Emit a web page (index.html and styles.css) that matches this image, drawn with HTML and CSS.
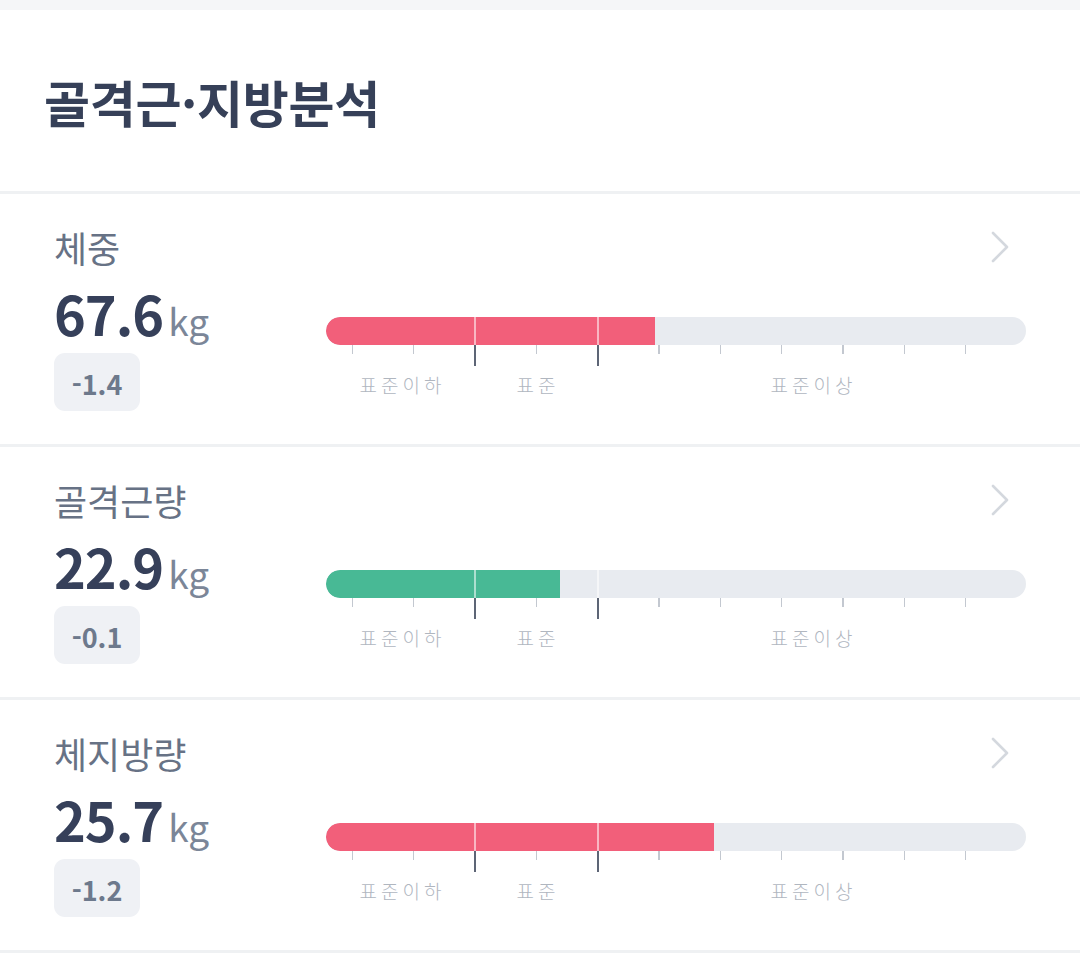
FILE: index.html
```html
<!DOCTYPE html>
<html lang="ko">
<head>
<meta charset="utf-8">
<link rel="stylesheet" href="styles.css">
</head>
<body>
<div class="topstrip"></div>
<header class="header"><h1 class="title">골격근·지방분석</h1></header>

<section class="row">
  <div class="head">
    <span class="label">체중</span>
    <svg class="chev" width="20" height="32" viewBox="0 0 20 32"><path d="M3 2 L17 16 L3 30" fill="none" stroke="#d4d8de" stroke-width="2.6" stroke-linecap="round" stroke-linejoin="round"/></svg>
  </div>
  <div class="body">
    <div class="left">
      <div class="value"><span class="num">67.6</span><span class="unit">kg</span></div>
      <div class="badge">-1.4</div>
    </div>
    <div class="chart">
      <div class="bar"><div class="fill red" style="width:329px"></div><i class="div d1"></i><i class="div d2"></i></div>
      <div class="ticks"><i></i><i></i><i class="major"></i><i></i><i class="major"></i><i></i><i></i><i></i><i></i><i></i><i></i></div>
      <div class="zones"><span>표준이하</span><span>표준</span><span>표준이상</span></div>
    </div>
  </div>
</section>

<section class="row">
  <div class="head">
    <span class="label">골격근량</span>
    <svg class="chev" width="20" height="32" viewBox="0 0 20 32"><path d="M3 2 L17 16 L3 30" fill="none" stroke="#d4d8de" stroke-width="2.6" stroke-linecap="round" stroke-linejoin="round"/></svg>
  </div>
  <div class="body">
    <div class="left">
      <div class="value"><span class="num">22.9</span><span class="unit">kg</span></div>
      <div class="badge">-0.1</div>
    </div>
    <div class="chart">
      <div class="bar"><div class="fill green" style="width:234px"></div><i class="div d1"></i><i class="div d2"></i></div>
      <div class="ticks"><i></i><i></i><i class="major"></i><i></i><i class="major"></i><i></i><i></i><i></i><i></i><i></i><i></i></div>
      <div class="zones"><span>표준이하</span><span>표준</span><span>표준이상</span></div>
    </div>
  </div>
</section>

<section class="row">
  <div class="head">
    <span class="label">체지방량</span>
    <svg class="chev" width="20" height="32" viewBox="0 0 20 32"><path d="M3 2 L17 16 L3 30" fill="none" stroke="#d4d8de" stroke-width="2.6" stroke-linecap="round" stroke-linejoin="round"/></svg>
  </div>
  <div class="body">
    <div class="left">
      <div class="value"><span class="num">25.7</span><span class="unit">kg</span></div>
      <div class="badge">-1.2</div>
    </div>
    <div class="chart">
      <div class="bar"><div class="fill red" style="width:388px"></div><i class="div d1"></i><i class="div d2"></i></div>
      <div class="ticks"><i></i><i></i><i class="major"></i><i></i><i class="major"></i><i></i><i></i><i></i><i></i><i></i><i></i></div>
      <div class="zones"><span>표준이하</span><span>표준</span><span>표준이상</span></div>
    </div>
  </div>
</section>
</body>
</html>
```

FILE: styles.css
```css
* { box-sizing: border-box; }
html, body { margin: 0; padding: 0; background: #ffffff; }
body {
  font-family: "Noto Sans CJK KR", "Noto Sans", sans-serif;
  width: 1080px;
}
.topstrip { height: 10px; background: #f5f6f8; }
.header {
  height: 184px;
  padding-left: 44px;
  display: flex;
  align-items: center;
  border-bottom: 3px solid #eff1f3;
}
.title {
  margin: 0;
  font-size: 50px;
  line-height: 60px;
  font-weight: 700;
  color: #364058;
  letter-spacing: -0.3px;
}
.row {
  height: 253px;
  padding: 36px 54px 0 54px;
  border-bottom: 3px solid #eff1f3;
}
.head {
  display: flex;
  justify-content: space-between;
  align-items: center;
  height: 34px;
}
.label {
  font-size: 36px;
  line-height: 34px;
  color: #677285;
  font-weight: 400;
}
.chev { margin-right: 16px; }
.body {
  display: grid;
  grid-template-columns: 272px 700px;
  margin-top: 21px;
}
.value {
  display: flex;
  align-items: baseline;
  height: 56px;
  line-height: 56px;
}
.num {
  font-size: 54px;
  font-weight: 700;
  color: #36405a;
  letter-spacing: -1px;
}
.unit {
  font-size: 37px;
  color: #7b8698;
  margin-left: 5px;
}
.badge {
  margin-top: 12px;
  width: 86px;
  height: 58px;
  border-radius: 11px;
  background: #eff1f5;
  color: #6d798c;
  font-size: 27px;
  font-weight: 700;
  display: flex;
  align-items: center;
  justify-content: center;
  padding-top: 2px;
}
.chart { margin-top: 32px; }
.bar {
  position: relative;
  height: 28px;
  border-radius: 14px;
  background: #e8ebf0;
  overflow: hidden;
}
.fill { height: 100%; border-radius: 14px 0 0 14px; }
.fill.red { background: #f25f7a; }
.fill.green { background: #48b995; }
.div {
  position: absolute;
  top: 0;
  bottom: 0;
  width: 1.5px;
  background: rgba(255,255,255,0.55);
}
.d1 { left: 148px; }
.d2 { left: 271px; }
.ticks {
  display: grid;
  grid-template-columns: repeat(11, 61.35px);
  padding-left: 25.5px;
  height: 21px;
  align-items: start;
}
.ticks i {
  display: block;
  width: 1.5px;
  height: 9px;
  background: #c3c8d0;
}
.ticks i.major { width: 2px; height: 21px; background: #5d6576; }
.zones {
  display: grid;
  grid-template-columns: 149px 122px 1fr;
  margin-top: 9px;
  font-size: 19px;
  line-height: 20px;
  color: #b0b6bf;
  letter-spacing: 4px;
  font-weight: 300;
}
.zones span { text-align: center; padding-left: 4px; }
```
